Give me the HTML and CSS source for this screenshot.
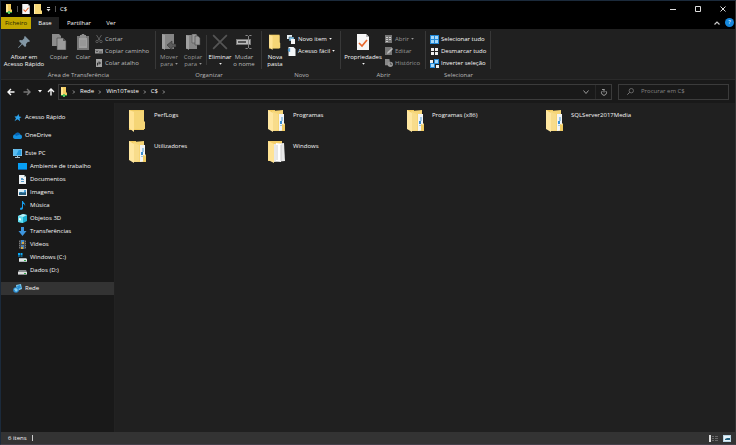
FILE: index.html
```html
<!DOCTYPE html>
<html lang="pt">
<head>
<meta charset="utf-8">
<title>C$</title>
<link rel="stylesheet" href="styles.css">
</head>
<body>
<svg class="defs" aria-hidden="true">
  <symbol id="folder" viewBox="0 0 17 23"><path d="M0 1h15v20H0z" fill="#f1cc62"/><path d="M3 2h12v10l1 1v7H5z" fill="#f5d576"/><path d="M0 1l5 2v20l-5-4z" fill="#ffe394"/></symbol>
  <symbol id="folder-doc" viewBox="0 0 17 23"><path d="M0 1h7v19H0z" fill="#f3ca5d"/><path d="M4 2l11-1v12l2 2v7H4z" fill="#f6d576"/><path d="M11 5h5v16l-5 1z" fill="#f3f5f6"/><path d="M12 12h2v3h-2z" fill="#3b8fd2"/><path d="M13 8h2v4h-2zM12 16h3v1h-3z" fill="#9fc8e6"/><path d="M14 15l3 1v6h-3z" fill="#f0cb62"/><path d="M5 3l5 2v16l-5 1z" fill="#f8dc8b"/><path d="M0 1l5 3v19l-5-3z" fill="#ffe7a1"/></symbol>
  <symbol id="folder-papers" viewBox="0 0 17 23"><path d="M0 1h14v20H0z" fill="#f4ce68"/><path d="M6 4l10-1 1 18-11 1z" fill="#e8e8e8"/><path d="M8 3l5 1v18l-5-1z" fill="#fff"/><path d="M9 5v15M13 5v16" stroke="#ccc" fill="none"/><path d="M0 1l6 3v19l-6-3z" fill="#ffe394"/></symbol>
  <symbol id="net-folder" viewBox="0 0 8 10"><path d="M1 0h5v5l1 1v2H1z" fill="#f3cd62"/><path d="M1 0l2 1v7H1z" fill="#ffe593"/><path d="M1 8h6v1H1z" fill="#259b3c"/><path d="M3 7h2v3H3z" fill="#55c260"/></symbol>
  <symbol id="check-page" viewBox="0 0 12 16"><path d="M0 0h9l3 3v13H0z" fill="#f7f7f7"/><path d="M9 0v3h3z" fill="#bbb"/><path d="M2 9l3 3 5-6" fill="none" stroke="#e8672c" stroke-width="1.7"/></symbol>
  <symbol id="pin" viewBox="0 0 12 12"><path d="M7 0l5 5-1 1-1-.3-2 2.2.2 2L7 11 4.200 8.300.5 12 0 11.500 3.600 7.800 1 5l1-1 2.200.2L6.400 2 6 1z" fill="#8397a5"/></symbol>
  <symbol id="copy" viewBox="0 0 14 16"><path d="M0 0h7l2 2v10H0z" fill="#8c8c8c"/><path d="M5 4h6l3 3v9H5z" fill="#9b9b9b" stroke="#444" stroke-width=".6"/><path d="M11 4v3h3z" fill="#555"/></symbol>
  <symbol id="paste" viewBox="0 0 12 16"><path d="M0 2h12v14H0z" fill="#777"/><path d="M2 4h8v10H2z" fill="#a0a0a0"/><path d="M3 1h1.500L5 0h2l.5 1H9v3H3z" fill="#8f8f8f"/><path d="M3 7h6M3 9h6M3 11h6" stroke="#868686" stroke-width=".7"/></symbol>
  <symbol id="cut" viewBox="0 0 8 8"><path d="M1.500 0L5 5.500M6.500 0L3 5.500" stroke="#6d6d6d" fill="none" stroke-width=".8"/><circle cx="2" cy="6.500" r="1.200" fill="none" stroke="#6d6d6d" stroke-width=".7"/><circle cx="6" cy="6.500" r="1.200" fill="none" stroke="#6d6d6d" stroke-width=".7"/></symbol>
  <symbol id="copy-path" viewBox="0 0 8 8"><path d="M0 2h8v4.500H0z" fill="#999"/><path d="M1 3.500l1 1.500 1-1.500M4 5h3" stroke="#333" stroke-width=".7" fill="none"/></symbol>
  <symbol id="shortcut" viewBox="0 0 8 8"><path d="M1 0h6v8H1z" fill="#a3a3a3"/><path d="M2.500 6.500V4H5M4 2.500L5.500 4 4 5.500" stroke="#222" stroke-width=".9" fill="none"/></symbol>
  <symbol id="move" viewBox="0 0 14 16"><path d="M0 0h12v15H0z" fill="#858585"/><path d="M0 0l3 1v15l-3-2z" fill="#a0a0a0"/><path d="M5 11l5-4v3h4v3h-4v3z" fill="#5b5b5b" stroke="#2a2a2a" stroke-width=".5"/></symbol>
  <symbol id="copy-to" viewBox="0 0 14 16"><path d="M0 1h11v14H0z" fill="#858585"/><path d="M0 1l3 1v14l-3-2z" fill="#a0a0a0"/><path d="M6 0h4l1 1v8H6z" fill="#999" stroke="#555" stroke-width=".6"/><path d="M9 2h3l2 2v7H9z" fill="#999" stroke="#444" stroke-width=".6"/></symbol>
  <symbol id="delete" viewBox="0 0 14 14"><path d="M1 1l12 12M13 1L1 13" stroke="#555" stroke-width="1.500"/></symbol>
  <symbol id="rename" viewBox="0 0 16 14"><path d="M0 4h15v6H0z" fill="#777"/><path d="M1 5h13v4H1z" fill="#bbb"/><path d="M2 6h8v2H2z" fill="#555"/><path d="M9.500.5h2l1 1 1-1h2M12.500 1v12M9.500 13.500h2l1-1 1 1h2" stroke="#888" fill="none"/></symbol>
  <symbol id="new-item" viewBox="0 0 9 9"><path d="M0 0h5v4H0z" fill="#e7f2f8"/><path d="M2 2h5v4H2z" fill="#81bddf" stroke="#222" stroke-width=".4"/><path d="M4 4h4v5H4z" fill="#f5f5f5"/></symbol>
  <symbol id="easy" viewBox="0 0 8 9"><path d="M1 0h5l2 2v7H1z" fill="#f2f5f7"/><path d="M0 3l2-2 1 1-1 1 1 1-1 1z" fill="#3f93cc"/></symbol>
  <symbol id="open" viewBox="0 0 8 8"><path d="M0 0h7v8H0z" fill="#777"/><path d="M1 2h2v1H1zM4 2h2v1H4zM1 4h2v1H1zM4 4h2v1H4zM1 6h2v1H1z" fill="#ccc"/></symbol>
  <symbol id="edit" viewBox="0 0 8 8"><path d="M0 0h7v8H0z" fill="#777"/><path d="M2 7l.5-2L7 1l1 1-4 4z" fill="#bbb"/></symbol>
  <symbol id="history" viewBox="0 0 9 9"><path d="M0 0h5l1 7H0z" fill="#888"/><circle cx="6" cy="6" r="3" fill="#999"/><path d="M6 4v2h2" stroke="#333" stroke-width=".7" fill="none"/></symbol>
  <symbol id="select-all" viewBox="0 0 9 9"><path d="M0 0h9v9H0z" fill="#2389d8"/><path d="M1 1h3v3H1zM5 1h3v3H5zM1 5h3v3H1zM5 5h3v3H5z" fill="#a6d8f9"/></symbol>
  <symbol id="select-none" viewBox="0 0 9 9"><path d="M1 1h3v3H1zM5 1h3v3H5zM1 5h3v3H1zM5 5h3v3H5z" fill="#eee"/></symbol>
  <symbol id="select-invert" viewBox="0 0 9 9"><path d="M4 0h5v5H4zM0 4h5v5H0z" fill="#2389d8"/><path d="M5 1h3v3H5zM1 5h3v3H1z" fill="#a6d8f9"/><path d="M0 1h3v3H0zM6 6h3v3H6z" fill="#eee"/></symbol>
  <symbol id="caret" viewBox="0 0 4 3"><path d="M0 0h4L2 2.500z" fill="currentColor"/></symbol>
  <symbol id="chevron-down" viewBox="0 0 6 6"><path d="M.5 1.500L3 4.500l2.500-3" fill="none" stroke="currentColor"/></symbol>
  <symbol id="chevron-right" viewBox="0 0 4 6"><path d="M1 1.500L2.500 3 1 4.500" fill="none" stroke="currentColor" stroke-width=".9"/></symbol>
  <symbol id="arrow" viewBox="0 0 8 8"><path d="M7.500 4H1M4 1L1 4l3 3" fill="none" stroke="currentColor" stroke-width="1.400"/></symbol>
  <symbol id="star" viewBox="0 0 9 9"><path d="M5.500 1l.7 2.400L8.500 4 6.600 5.300 7 8.200 4.500 6.300 1.500 8.200 3 5.300 1.500 3.500l2.500-.2z" fill="#2ca2ec"/></symbol>
  <symbol id="cloud" viewBox="0 0 9 9"><path d="M0 6c0-2 1-2.500 2-2.500C3 1 6.500 1 7 3.500c1.500 0 2 1 2 2.500s-1 2-2 2H2C1 8 0 7 0 6z" fill="#1490df"/><path d="M2 3.500C3 1 6.500 1 7 3.500L3 5z" fill="#0864b4"/></symbol>
  <symbol id="pc" viewBox="0 0 9 9"><path d="M0 0h9v7H0z" fill="#b6dcf0"/><path d="M.5.5h8v6h-8z" fill="#249ade"/><path d="M.5.5h5.500l-3 6H.5z" fill="#59bcf0"/><path d="M4 7h1v1h2v1H2V8h2z" fill="#a8bdc8"/></symbol>
  <symbol id="desktop" viewBox="0 0 9 9"><path d="M0 1h9v7H0z" fill="#079ff5"/><path d="M0 7h9v1H0z" fill="#0c65a6"/></symbol>
  <symbol id="doc" viewBox="0 0 9 9"><path d="M1 0h5l2 2v7H1z" fill="#edf2f5"/><path d="M3 3h2v2H3zM3 6h3v1H3zM5 4h1v1H5z" fill="#579dcc"/><path d="M6 0v2h2z" fill="#9bb"/></symbol>
  <symbol id="image" viewBox="0 0 9 9"><path d="M0 1h9v7H0z" fill="#eee"/><path d="M1 2h7v5H1z" fill="#4ea2dc"/><path d="M1 5l2-1 2 1 3-1v3H1z" fill="#245c7c"/><path d="M1 2h5v2H1z" fill="#d4effa"/></symbol>
  <symbol id="music" viewBox="0 0 9 9"><path d="M4 0h1c0 2 3 2 2 5-.2-1.500-1-2-2-2v4c0 2-3 2.500-3 1s1-1.500 2-1.500z" fill="#16a0f2"/></symbol>
  <symbol id="cube" viewBox="0 0 9 9"><path d="M0 2l5-2 4 1v6L5 9 0 8z" fill="#1caed2"/><path d="M0 2l5 1v6L0 8z" fill="#65dff1"/><path d="M0 2l5-2 4 1-4 2z" fill="#baf2f8"/><path d="M1 4l2 .4v2L1 6z" fill="#eaffff"/></symbol>
  <symbol id="download" viewBox="0 0 9 9"><path d="M3 0h3v4h2.500L4.500 9 .5 4H3z" fill="#3d94dc"/></symbol>
  <symbol id="video" viewBox="0 0 9 9"><path d="M1 0h7v9H1z" fill="#444"/><path d="M3 0h3v4H3z" fill="#3f89ca"/><path d="M3 5h3v4H3z" fill="#497dac"/><path d="M4 2h2v2H4zM3 7h2v2H3z" fill="#d2a84b"/><path d="M1 1h1v1H1zM1 3h1v1H1zM1 5h1v1H1zM1 7h1v1H1zM7 1h1v1H7zM7 3h1v1H7zM7 5h1v1H7zM7 7h1v1H7z" fill="#777"/></symbol>
  <symbol id="drive-win" viewBox="0 0 9 9"><path d="M0 0h2v2H0zM2.500 0h2v2h-2zM0 2.500h2v1H0zM2.500 2.500h2v1h-2z" fill="#0ca8f4"/><path d="M1 5h7l1 1v3H1z" fill="#aeb7bb"/><path d="M1 6h8v2H1z" fill="#e1e5e6"/><path d="M6 7h2v1H6z" fill="#30ab48"/></symbol>
  <symbol id="drive" viewBox="0 0 9 9"><path d="M1 4h7l1 2v3H0V6z" fill="#888c8e"/><path d="M0 6h9v2H0z" fill="#dedede"/><path d="M6 7h2v1H6z" fill="#30ab48"/></symbol>
  <symbol id="network" viewBox="0 0 9 9"><path d="M3 1l5-1 1 5-5 2z" fill="#78c9f0"/><path d="M4 2l3-1 1 3-3 1z" fill="#298ed1"/><circle cx="3" cy="6" r="2.800" fill="#2a8bd1"/><path d="M1 5l2-1 2 2-2 2z" fill="#8bd2ef"/></symbol>
</svg>

<div class="window">
  <header class="titlebar">
    <svg class="quick"><use href="#net-folder"/></svg><i class="bar"></i>
    <button class="plain" aria-label="Propriedades"><svg class="quick"><use href="#check-page"/></svg></button>
    <button class="plain" aria-label="Nova pasta"><svg class="quick" viewBox="0 0 8 10"><path d="M0 0h7v6l1 1v3H0z" fill="#f7d878"/><path d="M0 0l1 1v9H0z" fill="#fff0b5"/></svg></button>
    <button class="plain customize" aria-label="Personalizar"><svg viewBox="0 0 5 6"><path d="M1 1.500h3" stroke="#ddd"/><path d="M.5 3h4L2.500 5.500z" fill="#ddd"/></svg></button>
    <i class="bar"></i>
    <h1>C$</h1>
    <div class="captions">
      <button class="plain" aria-label="Minimizar"><svg viewBox="0 0 6 6"><path d="M0 3.500h6" stroke="#ddd"/></svg></button>
      <button class="plain" aria-label="Maximizar"><svg viewBox="0 0 6 6"><path d="M.5.5h5v5h-5z" stroke="#ddd" fill="none"/></svg></button>
      <button class="plain" aria-label="Fechar"><svg viewBox="0 0 6 6"><path d="M.5.5l5 5m0-5l-5 5" stroke="#ddd"/></svg></button>
    </div>
  </header>

  <nav class="tabs">
    <button class="tab file">Ficheiro</button>
    <button class="tab active">Base</button>
    <button class="tab share">Partilhar</button>
    <button class="tab view">Ver</button>
    <button class="plain collapse" aria-label="Minimizar friso"><svg viewBox="0 0 6 6"><path d="M.5 4.500L3 2l2.500 2.500" fill="none" stroke="#ccc" stroke-width="1.200"/></svg></button>
    <button class="help" aria-label="Ajuda">?</button>
  </nav>

  <section class="ribbon">
    <div class="group clipboard">
      <div class="tools">
        <button class="tool wide"><svg class="pin"><use href="#pin"/></svg><span>Afixar em<br>Acesso Rápido</span></button>
        <button class="tool narrow dim"><svg><use href="#copy"/></svg><span>Copiar</span></button>
        <button class="tool narrow dim"><svg><use href="#paste"/></svg><span>Colar</span></button>
        <div class="stack dim">
          <button><svg><use href="#cut"/></svg>Cortar</button>
          <button><svg><use href="#copy-path"/></svg>Copiar caminho</button>
          <button><svg><use href="#shortcut"/></svg>Colar atalho</button>
        </div>
      </div>
      <h2>Área de Transferência</h2>
    </div>
    <div class="group organize">
      <div class="tools">
        <button class="tool narrow off"><svg><use href="#move"/></svg><span>Mover<br>para <svg class="caret"><use href="#caret"/></svg></span></button>
        <button class="tool narrow off"><svg><use href="#copy-to"/></svg><span>Copiar<br>para <svg class="caret"><use href="#caret"/></svg></span></button>
        <i class="divider"></i>
        <button class="tool narrow"><svg><use href="#delete"/></svg><span>Eliminar<br><svg class="caret"><use href="#caret"/></svg></span></button>
        <button class="tool narrow dim"><svg><use href="#rename"/></svg><span>Mudar<br>o nome</span></button>
      </div>
      <h2>Organizar</h2>
    </div>
    <div class="group new">
      <div class="tools">
        <button class="tool narrow"><svg><use href="#folder"/></svg><span>Nova<br>pasta</span></button>
        <div class="stack">
          <button><svg><use href="#new-item"/></svg>Novo item <svg class="caret"><use href="#caret"/></svg></button>
          <button><svg><use href="#easy"/></svg>Acesso fácil <svg class="caret"><use href="#caret"/></svg></button>
        </div>
      </div>
      <h2>Novo</h2>
    </div>
    <div class="group opening">
      <div class="tools">
        <button class="tool wide"><svg><use href="#check-page"/></svg><span>Propriedades<br><svg class="caret"><use href="#caret"/></svg></span></button>
        <div class="stack off">
          <button><svg><use href="#open"/></svg>Abrir <svg class="caret"><use href="#caret"/></svg></button>
          <button><svg><use href="#edit"/></svg>Editar</button>
          <button><svg><use href="#history"/></svg>Histórico</button>
        </div>
      </div>
      <h2>Abrir</h2>
    </div>
    <div class="group select">
      <div class="tools">
        <div class="stack">
          <button><svg><use href="#select-all"/></svg>Selecionar tudo</button>
          <button><svg><use href="#select-none"/></svg>Desmarcar tudo</button>
          <button><svg><use href="#select-invert"/></svg>Inverter seleção</button>
        </div>
      </div>
      <h2>Selecionar</h2>
    </div>
  </section>

  <div class="navbar">
    <button class="plain" aria-label="Anterior"><svg><use href="#arrow"/></svg></button>
    <button class="plain forward" aria-label="Seguinte"><svg><use href="#arrow"/></svg></button>
    <button class="plain recent" aria-label="Localizações recentes"><svg><use href="#caret"/></svg></button>
    <button class="plain up" aria-label="Acima"><svg><use href="#arrow"/></svg></button>
    <div class="address">
      <svg class="place"><use href="#net-folder"/></svg>
      <svg class="sep"><use href="#chevron-right"/></svg><a href="#rede">Rede</a>
      <svg class="sep"><use href="#chevron-right"/></svg><a href="#win">Win10Teste</a>
      <svg class="sep"><use href="#chevron-right"/></svg><a href="#c">C$</a>
      <svg class="sep"><use href="#chevron-right"/></svg>
      <button class="plain history" aria-label="Histórico de localizações"><svg><use href="#chevron-down"/></svg></button>
      <button class="plain refresh" aria-label="Atualizar"><svg viewBox="0 0 7 8"><path d="M1.700 3a2.500 2.500 0 1 0 3.600 0M3.500 4.500V1M1.500 1.500h2.500" fill="none" stroke="#999"/></svg></button>
    </div>
    <label class="search"><svg viewBox="0 0 7 7"><circle cx="4.300" cy="2.700" r="2.200" fill="none" stroke="#777" stroke-width=".8"/><path d="M2.700 4.300L.3 6.700" stroke="#777"/></svg><input type="search" aria-label="Procurar" placeholder="Procurar em C$"></label>
  </div>

  <div class="body">
    <nav class="sidebar">
      <a href="#q"><svg><use href="#star"/></svg>Acesso Rápido</a>
      <a href="#o" class="root"><svg><use href="#cloud"/></svg>OneDrive</a>
      <a href="#pc-root" class="root"><svg><use href="#pc"/></svg>Este PC</a>
      <a href="#1" class="child"><svg><use href="#desktop"/></svg>Ambiente de trabalho</a>
      <a href="#2" class="child"><svg><use href="#doc"/></svg>Documentos</a>
      <a href="#3" class="child"><svg><use href="#image"/></svg>Imagens</a>
      <a href="#4" class="child"><svg><use href="#music"/></svg>Música</a>
      <a href="#5" class="child"><svg><use href="#cube"/></svg>Objetos 3D</a>
      <a href="#6" class="child"><svg><use href="#download"/></svg>Transferências</a>
      <a href="#7" class="child"><svg><use href="#video"/></svg>Vídeos</a>
      <a href="#8" class="child"><svg><use href="#drive-win"/></svg>Windows (C:)</a>
      <a href="#9" class="child"><svg><use href="#drive"/></svg>Dados (D:)</a>
      <a href="#rede" class="root current"><svg><use href="#network"/></svg>Rede</a>
    </nav>
    <main class="files">
      <a href="#f1"><svg><use href="#folder"/></svg>PerfLogs</a>
      <a href="#f2"><svg><use href="#folder-doc"/></svg>Programas</a>
      <a href="#f3"><svg><use href="#folder-doc"/></svg>Programas (x86)</a>
      <a href="#f4"><svg><use href="#folder-doc"/></svg>SQLServer2017Media</a>
      <a href="#f5"><svg><use href="#folder-doc"/></svg>Utilizadores</a>
      <a href="#f6"><svg><use href="#folder-papers"/></svg>Windows</a>
    </main>
  </div>

  <footer class="status">
    <span>6 itens</span><i></i>
    <button class="plain" aria-label="Detalhes"><svg viewBox="0 0 9 7"><path d="M0 0h2v7H0z" fill="#ddd"/><path d="M3 1.500h2M6 1.500h3M3 3.500h2M6 3.500h3M3 5.500h2M6 5.500h3" stroke="#777" stroke-width=".8"/></svg></button>
    <button class="plain" aria-label="Ícones grandes"><svg viewBox="0 0 9 7"><path d="M1 0h8v7H1z" fill="#b9d5e4"/><path d="M2 1h6v5H2z" fill="#e8f4fa"/><path d="M3 4l2-1h3v2H3z" fill="#23617f"/></svg></button>
  </footer>
</div>
</body>
</html>
```
FILE: styles.css
```css
* { box-sizing: border-box; }
body {
  margin: 0;
  background: #191919;
  color: #f8f8f8;
  font: 6px/7px "Open Sans", "Noto Sans", sans-serif;
}
button, input { font: inherit; color: inherit; background: none; border: 0; padding: 0; margin: 0; }
a { color: inherit; text-decoration: none; }
h1, h2 { margin: 0; font: inherit; }
svg { display: block; flex: none; }
.defs { position: absolute; width: 0; height: 0; }
.plain { display: grid; place-items: center; }
.window {
  display: flex;
  flex-direction: column;
  min-height: 100vh;
  border: 1px solid #1b2a3b;
  border-right-color: #333;
  border-bottom-color: #45404a;
}

.titlebar { display: flex; align-items: center; height: 16px; padding-left: 4px; background: #000; }
.quick { width: 8px; height: 10px; }
.titlebar .bar { width: 1px; height: 6px; margin: 0 4px; background: #555; }
.titlebar .plain + .plain { margin-left: 4px; }
.customize svg { width: 5px; height: 6px; }
.captions { display: flex; margin-left: auto; }
.captions .plain { width: 25px; height: 14px; }
.titlebar .captions .plain { margin: 0; }
.captions svg { width: 6px; height: 6px; }

.tabs { display: flex; height: 12px; align-items: stretch; background: #000; padding-right: 1px; }
.tab { width: 28px; }
.tab.file { width: 30px; background: #c3a800; color: #221c00; }
.tab.active { background: #202020; }
.tab.share { width: 40px; }
.tab.view { width: 24px; }
.collapse { margin-left: auto; width: 10px; }
.collapse svg { width: 6px; height: 6px; }
.help { width: 9px; height: 9px; margin: 1px 0 0 3px; border-radius: 50%; background: #1687dc; color: #fff; text-align: center; }

.ribbon { display: flex; height: 50px; background: #202020; }
.group { display: flex; flex-direction: column; position: relative; padding-top: 4px; }
.group::after { content: ""; position: absolute; right: 0; top: 2px; bottom: 10px; width: 1px; background: #383838; }
.group h2 { text-align: center; color: #b8b8b8; line-height: 8px; }
.clipboard { width: 155px; }
.organize { width: 106px; }
.new { width: 79px; }
.opening { width: 85px; }
.select { width: 65px; }
.tools { display: flex; height: 38px; }
.tool { display: flex; flex-direction: column; align-items: center; width: 24px; white-space: nowrap; }
.tool > svg { width: 16px; height: 16px; margin: 1px 0 4px; }
.tool > .pin { width: 12px; }
.tool.wide { width: 46px; }
.opening .tool.wide { width: 44px; }
.tool span { display: block; text-align: center; }
.caret { display: inline-block; width: 3px; height: 2px; vertical-align: middle; }
.dim { color: #bbb; }
.off { color: #999; }
.stack { display: flex; flex-direction: column; }
.stack button { display: flex; align-items: center; height: 12px; gap: 2px; white-space: nowrap; }
.stack button svg:first-child { width: 9px; height: 9px; }
.stack.dim button svg:first-child, .stack.off button svg:first-child { width: 8px; height: 8px; }
.select .tools { padding-left: 4px; }
.organize .tools, .new .tools { padding-left: 1px; }
.divider { width: 1px; height: 30px; margin: 2px 1px 0; background: #383838; }

.navbar { display: flex; align-items: center; height: 24px; padding: 0 6px; border-top: 1px solid #2a2a2a; }
.navbar > .plain { width: 8px; margin-right: 8px; }
.navbar svg { width: 8px; height: 8px; }
.navbar .forward { color: #777; margin-right: 7px; }
.forward svg { transform: rotate(180deg); }
.navbar .recent { width: 4px; margin-right: 5px; }
.navbar .recent svg { width: 4px; height: 3px; }
.up svg { transform: rotate(90deg); }
.navbar .up { margin-right: 3px; }
.address { display: flex; align-items: center; flex: 1; height: 16px; border: 1px solid #3b3b3b; padding-left: 1px; }
.address .place { width: 8px; height: 10px; }
.address .sep { width: 4px; height: 6px; margin: 0 4px; color: #aaa; }
.history { width: 18px; margin-left: auto; color: #999; }
.navbar .history svg { width: 6px; height: 6px; }
.refresh { width: 16px; height: 14px; border-left: 1px solid #282828; }
.search { display: flex; align-items: center; width: 111px; height: 16px; margin-left: 6px; padding-left: 8px; border: 1px solid #3b3b3b; gap: 7px; }
.navbar .search svg { width: 7px; height: 7px; }
.search input { flex: 1; min-width: 0; outline: 0; }
.search input::placeholder { color: #858585; opacity: 1; }

.body { display: flex; flex: 1; }
.sidebar { width: 114px; padding-top: 8px; border-right: 1px solid #222; }
.sidebar a { display: flex; align-items: center; height: 13px; padding-left: 12px; gap: 3px; }
.sidebar svg { width: 9px; height: 9px; }
.sidebar .root { margin-top: 5px; }
.sidebar .child { padding-left: 17px; }
.sidebar .current { background: #333; }
.files {
  display: grid;
  flex: 1;
  grid-template-columns: repeat(auto-fill, 139px);
  grid-auto-rows: 31px;
  align-content: start;
  padding: 6px 0 0 14px;
  background: #202020;
}
.files a { display: flex; gap: 8px; line-height: 13px; }
.files svg { width: 17px; height: 23px; }

.status { display: flex; align-items: center; height: 12px; padding: 0 4px 0 7px; background: #333; }
.status i { width: 1px; height: 6px; margin: 0 auto 0 5px; background: #ccc; }
.status .plain { margin-left: 4px; }
.status svg { width: 9px; height: 7px; }
```
